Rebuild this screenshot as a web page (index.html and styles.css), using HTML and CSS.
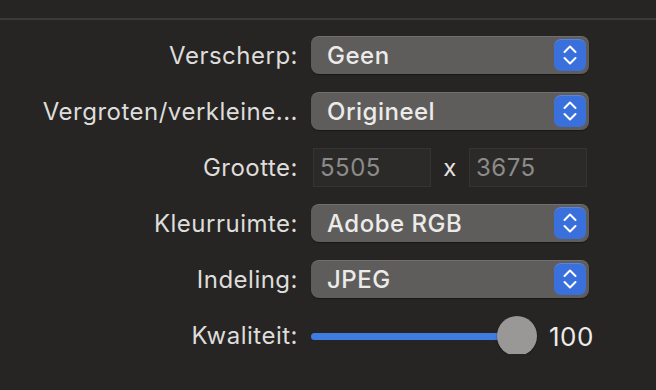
FILE: index.html
```html
<!DOCTYPE html>
<html lang="nl">

<head>
    <meta charset="UTF-8">
    <meta name="viewport" content="width=device-width, initial-scale=1.0">
    <title>Exporteren</title>
    <link rel="stylesheet" href="styles.css">
</head>

<body>
    <div class="toolbar-line"></div>

    <div class="form">
        <label class="label">Verscherp:</label>
        <div class="popup">
            <span class="popup-value">Geen</span>
            <span class="stepper">
                <svg width="14" height="22" viewBox="0 0 14 22"><path d="M1.5 8 L7 2.5 L12.5 8 M1.5 14 L7 19.5 L12.5 14" fill="none" stroke="#fff" stroke-width="2" stroke-linecap="round" stroke-linejoin="round"/></svg>
            </span>
        </div>

        <label class="label">Vergroten/verkleine...</label>
        <div class="popup">
            <span class="popup-value">Origineel</span>
            <span class="stepper">
                <svg width="14" height="22" viewBox="0 0 14 22"><path d="M1.5 8 L7 2.5 L12.5 8 M1.5 14 L7 19.5 L12.5 14" fill="none" stroke="#fff" stroke-width="2" stroke-linecap="round" stroke-linejoin="round"/></svg>
            </span>
        </div>

        <label class="label">Grootte:</label>
        <div class="size-row">
            <div class="field">5505</div>
            <span class="times">x</span>
            <div class="field">3675</div>
        </div>

        <label class="label">Kleurruimte:</label>
        <div class="popup">
            <span class="popup-value">Adobe RGB</span>
            <span class="stepper">
                <svg width="14" height="22" viewBox="0 0 14 22"><path d="M1.5 8 L7 2.5 L12.5 8 M1.5 14 L7 19.5 L12.5 14" fill="none" stroke="#fff" stroke-width="2" stroke-linecap="round" stroke-linejoin="round"/></svg>
            </span>
        </div>

        <label class="label">Indeling:</label>
        <div class="popup">
            <span class="popup-value">JPEG</span>
            <span class="stepper">
                <svg width="14" height="22" viewBox="0 0 14 22"><path d="M1.5 8 L7 2.5 L12.5 8 M1.5 14 L7 19.5 L12.5 14" fill="none" stroke="#fff" stroke-width="2" stroke-linecap="round" stroke-linejoin="round"/></svg>
            </span>
        </div>

        <label class="label">Kwaliteit:</label>
        <div class="slider-row">
            <div class="slider">
                <div class="track"></div>
                <div class="knob"></div>
            </div>
            <span class="slider-value">100</span>
        </div>
    </div>
</body>

</html>
```

FILE: styles.css
```css
body {
    margin: 0;
    background-color: #262523;
    font-family: Inter, "Open Sans", sans-serif;
    color: #dedddb;
}

.toolbar-line {
    height: 2px;
    margin-top: 18px;
    background-color: #3b3a38;
}

.form {
    display: grid;
    grid-template-columns: 298px 278px;
    grid-auto-rows: 38px;
    column-gap: 13px;
    row-gap: 18px;
    padding-top: 16px;
    align-items: center;
    font-size: 24px;
    letter-spacing: 0.5px;
}

.label {
    text-align: right;
    white-space: nowrap;
}

.popup {
    height: 38px;
    box-sizing: border-box;
    display: flex;
    align-items: center;
    justify-content: space-between;
    padding: 0 3px 0 16px;
    background-color: #5e5d5b;
    border-radius: 8px;
    box-shadow: inset 0 1px 0 rgba(255, 255, 255, 0.12), 0 1px 1px rgba(0, 0, 0, 0.35);
}

.popup-value {
    font-weight: 500;
    color: #ecebe9;
}

.stepper {
    width: 32px;
    height: 32px;
    display: flex;
    align-items: center;
    justify-content: center;
    background-color: #3a70dc;
    border-radius: 7px;
    box-shadow: inset 0 1px 0 rgba(255, 255, 255, 0.15);
}

.size-row {
    display: flex;
    align-items: center;
    padding-left: 2px;
}

.field {
    width: 118px;
    height: 39px;
    box-sizing: border-box;
    padding-left: 6px;
    display: flex;
    align-items: center;
    color: #8c8b89;
    background-color: #2b2a28;
    border: 1px solid #353432;
}

.times {
    width: 38px;
    text-align: center;
    color: #e4e3e1;
}

.slider-row {
    display: flex;
    align-items: center;
    height: 40px;
    margin-top: 2px;
}

.slider {
    position: relative;
    flex-shrink: 0;
    width: 226px;
    height: 40px;
    display: flex;
    align-items: center;
}

.track {
    width: 210px;
    height: 7px;
    border-radius: 4px;
    background-color: #3f7be0;
}

.knob {
    position: absolute;
    right: 0;
    top: 0;
    width: 40px;
    height: 40px;
    border-radius: 50%;
    background-color: #999896;
    box-shadow: 0 1px 2px rgba(0, 0, 0, 0.4);
}

.slider-value {
    margin-left: 12px;
    font-size: 26px;
    white-space: nowrap;
    color: #ecebe9;
}
```
